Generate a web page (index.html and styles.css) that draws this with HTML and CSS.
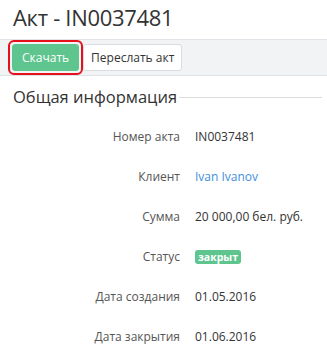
FILE: index.html
```html
<!DOCTYPE html>
<html lang="ru">
<head>
    <meta charset="UTF-8">
    <meta name="viewport" content="width=device-width, initial-scale=1.0">
    <title>Акт - IN0037481</title>
    <link rel="stylesheet" href="styles.css">
</head>
<body>
    <h1 class="page-title">Акт - IN0037481</h1>

    <div class="toolbar">
        <span class="focus-ring">
            <button class="btn btn-green">Скачать</button>
        </span>
        <button class="btn btn-default">Переслать акт</button>
    </div>

    <div class="section">
        <h2 class="section-title"><span>Общая информация</span></h2>

        <div class="info-row">
            <div class="info-label">Номер акта</div>
            <div class="info-value">IN0037481</div>
        </div>
        <div class="info-row">
            <div class="info-label">Клиент</div>
            <div class="info-value"><a href="#">Ivan Ivanov</a></div>
        </div>
        <div class="info-row">
            <div class="info-label">Сумма</div>
            <div class="info-value">20 000,00 бел. руб.</div>
        </div>
        <div class="info-row">
            <div class="info-label">Статус</div>
            <div class="info-value"><span class="badge">закрыт</span></div>
        </div>
        <div class="info-row">
            <div class="info-label">Дата создания</div>
            <div class="info-value">01.05.2016</div>
        </div>
        <div class="info-row">
            <div class="info-label">Дата закрытия</div>
            <div class="info-value">01.06.2016</div>
        </div>
    </div>
</body>
</html>
```

FILE: styles.css
```css
body {
    margin: 0;
    font-family: 'Open Sans', sans-serif;
    font-size: 12px;
    color: #333;
    background-color: #fff;
}

.page-title {
    margin: 0;
    padding: 2px 12px 0 13px;
    height: 37px;
    font-size: 22px;
    font-weight: 400;
    line-height: 30px;
    letter-spacing: -0.3px;
    color: #333;
}

.toolbar {
    display: flex;
    align-items: center;
    height: 35px;
    padding: 0 8px;
    background-color: #f1f3f5;
    border-top: 1px solid #dfe3e7;
    border-bottom: 1px solid #dfe3e7;
}

.focus-ring {
    display: flex;
    padding: 2px;
    border: 2px solid #e5101b;
    border-radius: 6px;
}

.btn {
    height: 27px;
    padding: 0 9px;
    font-family: 'Open Sans', sans-serif;
    font-size: 12px;
    border-radius: 3px;
    cursor: pointer;
}

.btn-green {
    color: #fff;
    background-color: #5ec58e;
    border: 1px solid #5ec58e;
}

.btn-default {
    padding: 0 7px;
    color: #333;
    background-color: #fff;
    border: 1px solid #d9dde1;
}

.section {
    padding: 0 5px 0 13px;
}

.section-title {
    display: flex;
    align-items: center;
    margin: 7px 0 5px;
    font-size: 16.5px;
    font-weight: 400;
    line-height: 28px;
    color: #333;
}

.section-title::after {
    content: "";
    flex: 1;
    height: 1px;
    margin-left: 2px;
    background-color: #ddd;
}

.info-row {
    display: grid;
    grid-template-columns: 167px 1fr;
    column-gap: 15px;
    align-items: center;
    height: 40px;
}

.info-label {
    text-align: right;
    color: #555;
}

.info-value a {
    color: #3f8fdc;
    text-decoration: none;
}

.badge {
    display: inline-block;
    padding: 0 3px;
    font-size: 10.5px;
    font-weight: 700;
    line-height: 14px;
    color: #fff;
    background-color: #5ec58e;
    border-radius: 3px;
}
```
